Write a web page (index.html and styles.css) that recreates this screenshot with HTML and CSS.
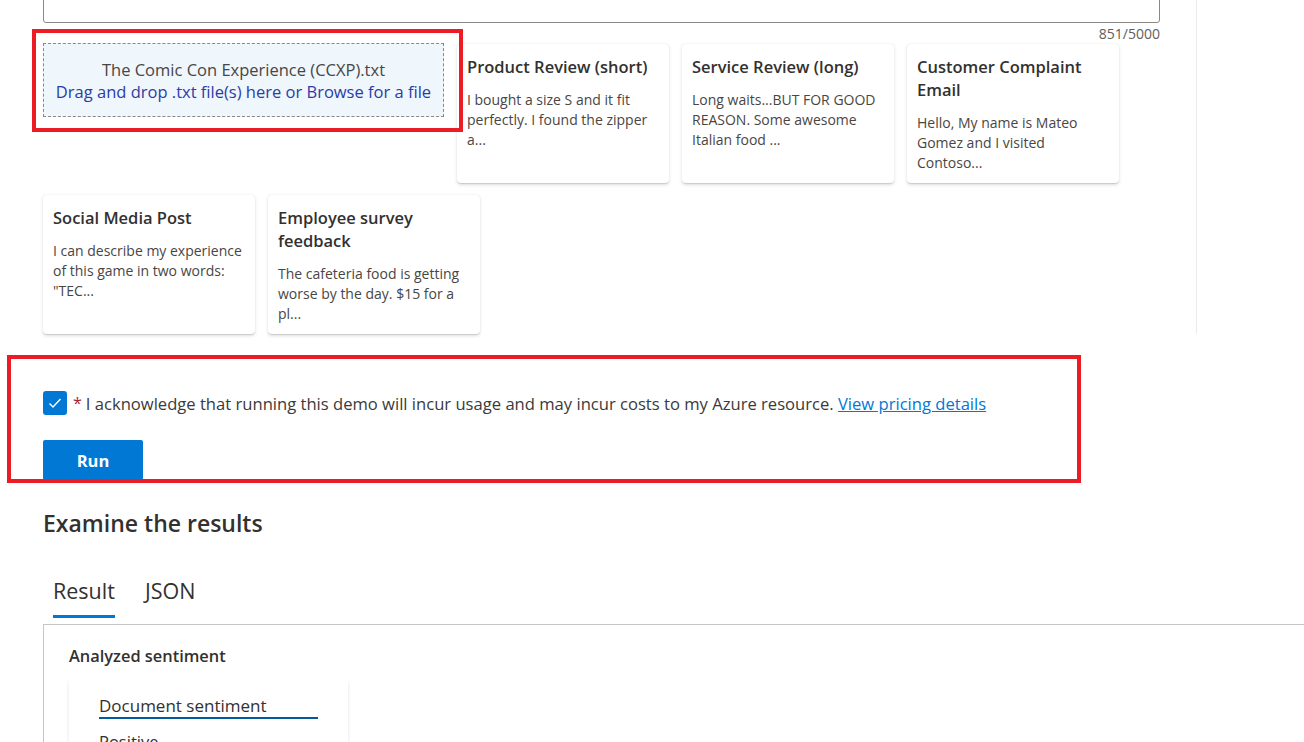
FILE: index.html
```html
<!DOCTYPE html>
<html lang="en">
<head>
<meta charset="utf-8">
<title>Sentiment analysis demo</title>
<link rel="stylesheet" href="styles.css">
</head>
<body>
<div class="page">
  <section class="top">
    <div class="main">
      <div class="textarea"></div>
      <div class="counter">851/5000</div>
      <div class="samples">
        <div class="dropzone">
          <div class="dz-file">The Comic Con Experience (CCXP).txt</div>
          <div class="dz-hint">Drag and drop .txt file(s) here or Browse for a file</div>
        </div>
        <div class="card">
          <div class="card-title">Product Review (short)</div>
          <div class="card-body">I bought a size S and it fit perfectly. I found the zipper a...</div>
        </div>
        <div class="card">
          <div class="card-title">Service Review (long)</div>
          <div class="card-body">Long waits...BUT FOR GOOD REASON. Some awesome Italian food ...</div>
        </div>
        <div class="card">
          <div class="card-title">Customer Complaint Email</div>
          <div class="card-body">Hello, My name is Mateo Gomez and I visited Contoso...</div>
        </div>
        <div class="card">
          <div class="card-title">Social Media Post</div>
          <div class="card-body">I can describe my experience of this game in two words: "TEC...</div>
        </div>
        <div class="card">
          <div class="card-title">Employee survey feedback</div>
          <div class="card-body">The cafeteria food is getting worse by the day. $15 for a pl...</div>
        </div>
      </div>
      <div class="highlight highlight-drop"></div>
    </div>
  </section>

  <section class="ack">
    <div class="ack-row">
      <span class="checkbox">
        <svg width="14" height="14" viewBox="0 0 14 14"><polyline points="1.5,7.5 5,11 12.5,3" fill="none" stroke="#fff" stroke-width="1.4"/></svg>
      </span>
      <span class="req">*</span>
      <span class="ack-text">I acknowledge that running this demo will incur usage and may incur costs to my Azure resource. <a class="link" href="#">View pricing details</a></span>
    </div>
    <button class="run">Run</button>
    <div class="highlight highlight-ack"></div>
  </section>

  <section class="results">
    <h2 class="results-title">Examine the results</h2>
    <div class="tabs">
      <div class="tab active">Result</div>
      <div class="tab">JSON</div>
    </div>
    <div class="panel">
      <div class="panel-title">Analyzed sentiment</div>
      <div class="doc-card">
        <div class="doc-title">Document sentiment</div>
        <div class="doc-value">Positive</div>
      </div>
    </div>
  </section>
</div>
</body>
</html>
```

FILE: styles.css
```css
html, body {
  margin: 0;
  padding: 0;
  background: #fff;
  overflow: hidden;
}
body {
  font-family: "Open Sans", "Noto Sans", sans-serif;
  color: #323130;
  width: 1304px;
  height: 742px;
}
.page {
  position: relative;
}
.top {
  display: flex;
}
.main {
  position: relative;
  width: 1117px;
  padding: 0 36px 0 43px;
  border-right: 1px solid #edebe9;
  height: 334px;
}
.textarea {
  height: 40px;
  margin-top: -17px;
  border: 1px solid #8a8886;
  border-radius: 3px;
  box-sizing: border-box;
}
.counter {
  text-align: right;
  font-size: 14px;
  color: #605e5c;
  line-height: 20px;
  margin-top: 1px;
}
.samples {
  display: flex;
  flex-wrap: wrap;
  gap: 12px 13px;
  margin-top: 0;
  width: 1090px;
}
.dropzone {
  width: 401px;
  height: 74px;
  box-sizing: border-box;
  border: 1px dashed #8a8886;
  background: #eff6fc;
  text-align: center;
  padding-top: 15px;
  font-size: 16.5px;
  line-height: 22px;
  margin-top: -1px;
}
.dz-file { color: #484644; }
.dz-hint { color: #2a3da6; }
.card {
  width: 212px;
  height: 139px;
  box-sizing: border-box;
  padding: 11px 10px;
  background: #fff;
  border-radius: 4px;
  box-shadow: 0 1.6px 3.6px rgba(0,0,0,0.13), 0 0.3px 0.9px rgba(0,0,0,0.11);
}
.card-title {
  font-size: 16.5px;
  font-weight: 600;
  line-height: 23px;
  color: #323130;
}
.card-body {
  margin-top: 12px;
  font-size: 14px;
  line-height: 20px;
  color: #484644;
}
.highlight {
  position: absolute;
  border: 4px solid #ec1c24;
  box-sizing: border-box;
  pointer-events: none;
}
.highlight-drop {
  left: 32px;
  top: 29px;
  width: 431px;
  height: 103px;
}
.ack {
  position: relative;
  padding: 57px 0 0 43px;
  height: 146px;
  box-sizing: border-box;
}
.ack-row {
  display: flex;
  align-items: center;
  height: 24px;
}
.checkbox {
  width: 24px;
  height: 24px;
  border-radius: 3px;
  background: #0078d4;
  display: flex;
  align-items: center;
  justify-content: center;
}
.req {
  color: #a4262c;
  font-size: 16px;
  margin: 0 4px 0 6px;
}
.ack-text {
  font-size: 16.6px;
  color: #3b3a39;
  white-space: nowrap;
}
.link {
  color: #0078d4;
  text-decoration: underline;
}
.run {
  display: block;
  margin-top: 25px;
  width: 100px;
  height: 40px;
  border: none;
  border-radius: 2px;
  background: #0078d4;
  color: #fff;
  font-family: inherit;
  font-size: 16.5px;
  font-weight: 700;
}
.highlight-ack {
  left: 7px;
  top: 21px;
  width: 1074px;
  height: 128px;
}
.results {
  padding-left: 43px;
}
.results-title {
  margin: 27px 0 0;
  font-size: 23px;
  font-weight: 600;
  line-height: 32px;
  color: #323130;
}
.tabs {
  display: flex;
  gap: 30px;
  margin-top: 38px;
  padding-left: 10px;
}
.tab {
  font-size: 21.5px;
  line-height: 28px;
  padding-bottom: 13px;
  color: #323130;
}
.tab.active {
  border-bottom: 3px solid #0078d4;
  padding-bottom: 10px;
}
.panel {
  margin-top: 6px;
  border-top: 1px solid #c8c6c4;
  border-left: 1px solid #c8c6c4;
  width: 1300px;
  padding: 19px 0 0 25px;
  box-sizing: border-box;
}
.panel-title {
  font-size: 16.4px;
  font-weight: 600;
  line-height: 24px;
}
.doc-card {
  margin-top: 11px;
  width: 279px;
  height: 100px;
  padding: 15px 30px;
  box-sizing: border-box;
  box-shadow: 0 1.6px 3.6px rgba(0,0,0,0.10), 0 0.3px 0.9px rgba(0,0,0,0.08);
}
.doc-title {
  width: 219px;
  font-size: 17px;
  font-weight: 500;
  line-height: 23px;
  border-bottom: 2px solid #005a9e;
}
.doc-value {
  font-size: 16.5px;
  line-height: 24px;
  margin-top: 11px;
  color: #323130;
}
```
